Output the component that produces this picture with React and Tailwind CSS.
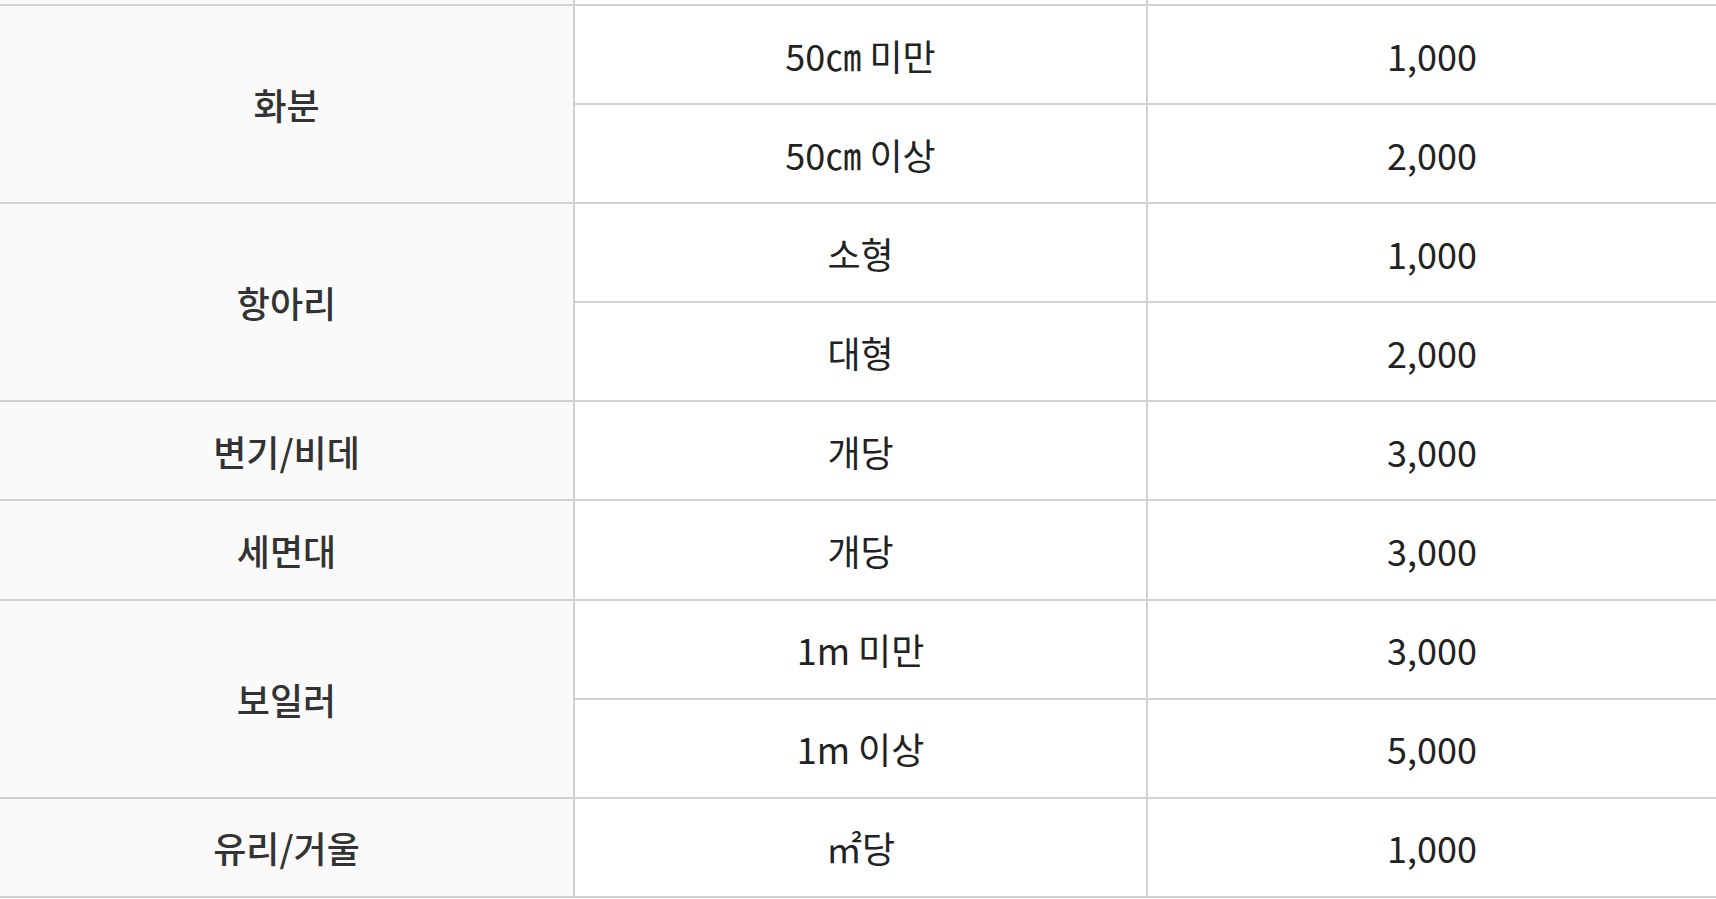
const rows = [
  { name: "화분", items: [["50㎝ 미만", "1,000"], ["50㎝ 이상", "2,000"]] },
  { name: "항아리", items: [["소형", "1,000"], ["대형", "2,000"]] },
  { name: "변기/비데", items: [["개당", "3,000"]] },
  { name: "세면대", items: [["개당", "3,000"]] },
  { name: "보일러", items: [["1m 미만", "3,000"], ["1m 이상", "5,000"]] },
  { name: "유리/거울", items: [["㎡당", "1,000"]] },
];

const font = { fontFamily: '"Noto Sans CJK KR", "Noto Sans", sans-serif' };

export default function App() {
  return (
    <div className="w-[1716px] h-[899px] overflow-hidden bg-white" style={font}>
      {/* 잘린 윗줄 */}
      <div className="grid grid-cols-[573px_571px_1fr] gap-x-[2px] bg-[#d1d1d1] h-[4px]">
        <div className="bg-[#fafafa]" />
        <div className="bg-white" />
        <div className="bg-white" />
      </div>
      <div className="grid grid-cols-[573px_571px_1fr] auto-rows-[97.1px] gap-[2px] bg-[#d1d1d1] py-[2px]">
        {rows.map((r) => [
          <div
            key={r.name}
            className={`bg-[#fafafa] flex items-center justify-center text-[36px] font-medium text-[#333] ${
              r.items.length === 2 ? "row-span-2" : ""
            }`}
          >
            {r.name}
          </div>,
          ...r.items.map(([label, price], i) => [
            <div
              key={r.name + "l" + i}
              className="bg-white flex items-center justify-center text-[36px] text-[#222] col-start-2"
            >
              {label}
            </div>,
            <div
              key={r.name + "p" + i}
              className="bg-white flex items-center justify-center text-[36px] text-[#222] col-start-3"
            >
              {price}
            </div>,
          ]),
        ])}
      </div>
    </div>
  );
}
